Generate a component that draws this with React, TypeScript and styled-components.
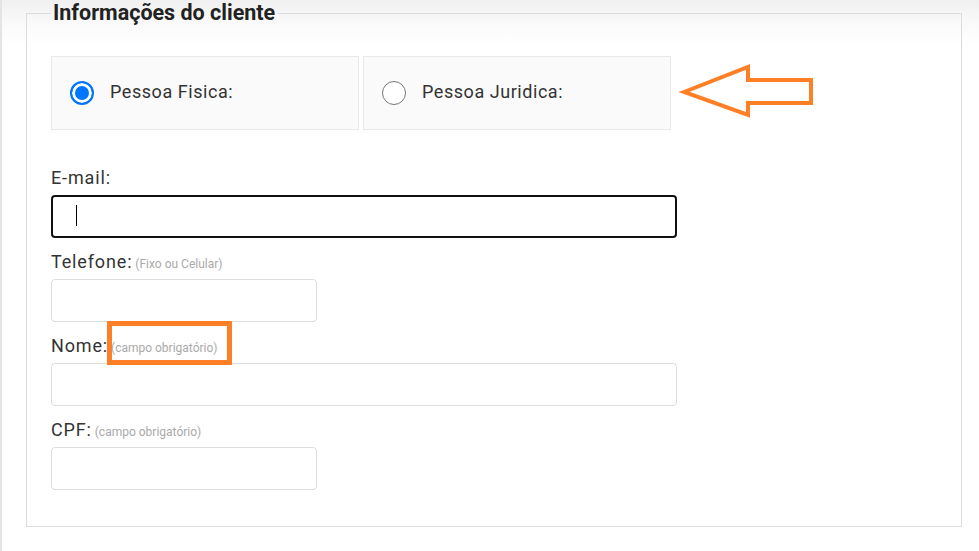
import styled, { createGlobalStyle } from "styled-components";

const GlobalStyle = createGlobalStyle`
  html, body {
    margin: 0;
    padding: 0;
    background: #ffffff;
  }
  body {
    font-family: Roboto, "Liberation Sans", Arial, sans-serif;
  }
  * {
    box-sizing: border-box;
  }
`;

interface FieldProps {
  label: string;
  hint?: string;
  wide?: boolean;
  focused?: boolean;
  first?: boolean;
}

const Field = ({ label, hint, wide, focused, first }: FieldProps) => {
  return (
    <FieldGroup $first={first}>
      <Label>
        {label}
        {hint && <Hint> {hint}</Hint>}
      </Label>
      <InputWrap $wide={wide}>
        <TextInput type="text" $focused={focused} aria-label={label} />
        {focused && <Caret />}
      </InputWrap>
    </FieldGroup>
  );
};

const App = () => {
  return (
    <Page>
      <GlobalStyle />
      <Fieldset>
        <Legend>Informações do cliente</Legend>

        <RadioRow>
          <RadioCard>
            <Radio type="radio" name="tipo" defaultChecked />
            <span>Pessoa Fisica:</span>
          </RadioCard>
          <RadioCard>
            <Radio type="radio" name="tipo" />
            <span>Pessoa Juridica:</span>
          </RadioCard>
        </RadioRow>

        <Field label="E-mail:" wide focused first />
        <Field label="Telefone:" hint="(Fixo ou Celular)" />
        <Field label="Nome:" hint="(campo obrigatório)" wide />
        <Field label="CPF:" hint="(campo obrigatório)" />
      </Fieldset>

      {/* marcações em laranja */}
      <Arrow width="142" height="58" viewBox="0 0 142 58">
        <polygon
          points="6,30 70,5 70,18 133,18 133,41 70,41 70,53"
          fill="none"
          stroke="#ff7f27"
          strokeWidth="4"
          strokeLinejoin="miter"
        />
      </Arrow>
      <Highlight />
    </Page>
  );
};

export default App;

const Page = styled.div`
  position: relative;
  height: 551px;
  overflow: hidden;
  padding: 1px 17px 0 24px;
  border-left: 2px solid #e4e4e4;
  background: linear-gradient(180deg, #f0f0f0 0px, #f9f9f9 22px, #ffffff 44px);
`;

const Fieldset = styled.fieldset`
  margin: 0;
  padding: 0 24px 36px;
  border: 1px solid #dcdcdc;
  min-width: 0;
`;

const Legend = styled.legend`
  padding: 0 2px;
  font-size: 21.5px;
  font-weight: 700;
  line-height: 24px;
  color: #222222;
`;

const RadioRow = styled.div`
  display: flex;
  gap: 4px;
  margin-top: 31px;
`;

const RadioCard = styled.label`
  display: flex;
  align-items: center;
  gap: 16px;
  width: 308px;
  height: 74px;
  padding-left: 18px;
  padding-bottom: 3px;
  background: #fafafa;
  border: 1px solid #e9e9e9;
  font-size: 18px;
  color: #333333;
  letter-spacing: 0.55px;

  input {
    margin-top: 3px;
  }
`;

const Radio = styled.input`
  appearance: none;
  margin: 0;
  width: 24px;
  height: 24px;
  border-radius: 50%;
  border: 1.5px solid #767676;
  background: #ffffff;

  &:checked {
    border: 2px solid #0075ff;
    background: #0075ff;
    box-shadow: inset 0 0 0 3px #ffffff;
  }
`;

const FieldGroup = styled.div<{ $first?: boolean }>`
  margin-top: ${(p) => (p.$first ? "40px" : "16px")};
`;

const Label = styled.label`
  display: block;
  font-size: 18px;
  line-height: 16px;
  letter-spacing: 0.85px;
  color: #333333;
  margin-bottom: 9px;
`;

const Hint = styled.span`
  font-size: 12px;
  line-height: 1;
  letter-spacing: 0;
  color: #a9a9a9;
`;

const InputWrap = styled.div<{ $wide?: boolean }>`
  position: relative;
  width: ${(p) => (p.$wide ? "626px" : "266px")};
`;

const TextInput = styled.input<{ $focused?: boolean }>`
  display: block;
  width: 100%;
  height: 43px;
  padding: 0 24px;
  border-radius: 4px;
  border: ${(p) => (p.$focused ? "2px solid #111111" : "1px solid #dddddd")};
  background: #ffffff;
  outline: none;
  caret-color: transparent;
  font-family: inherit;
  font-size: 16px;
`;

const Caret = styled.span`
  position: absolute;
  left: 25px;
  top: 10px;
  width: 1px;
  height: 21px;
  background: #000000;
`;

const Arrow = styled.svg`
  position: absolute;
  left: 676px;
  top: 62px;
`;

const Highlight = styled.div`
  position: absolute;
  left: 105px;
  top: 321px;
  width: 125px;
  height: 44px;
  border: 5px solid #ff7f27;
`;
